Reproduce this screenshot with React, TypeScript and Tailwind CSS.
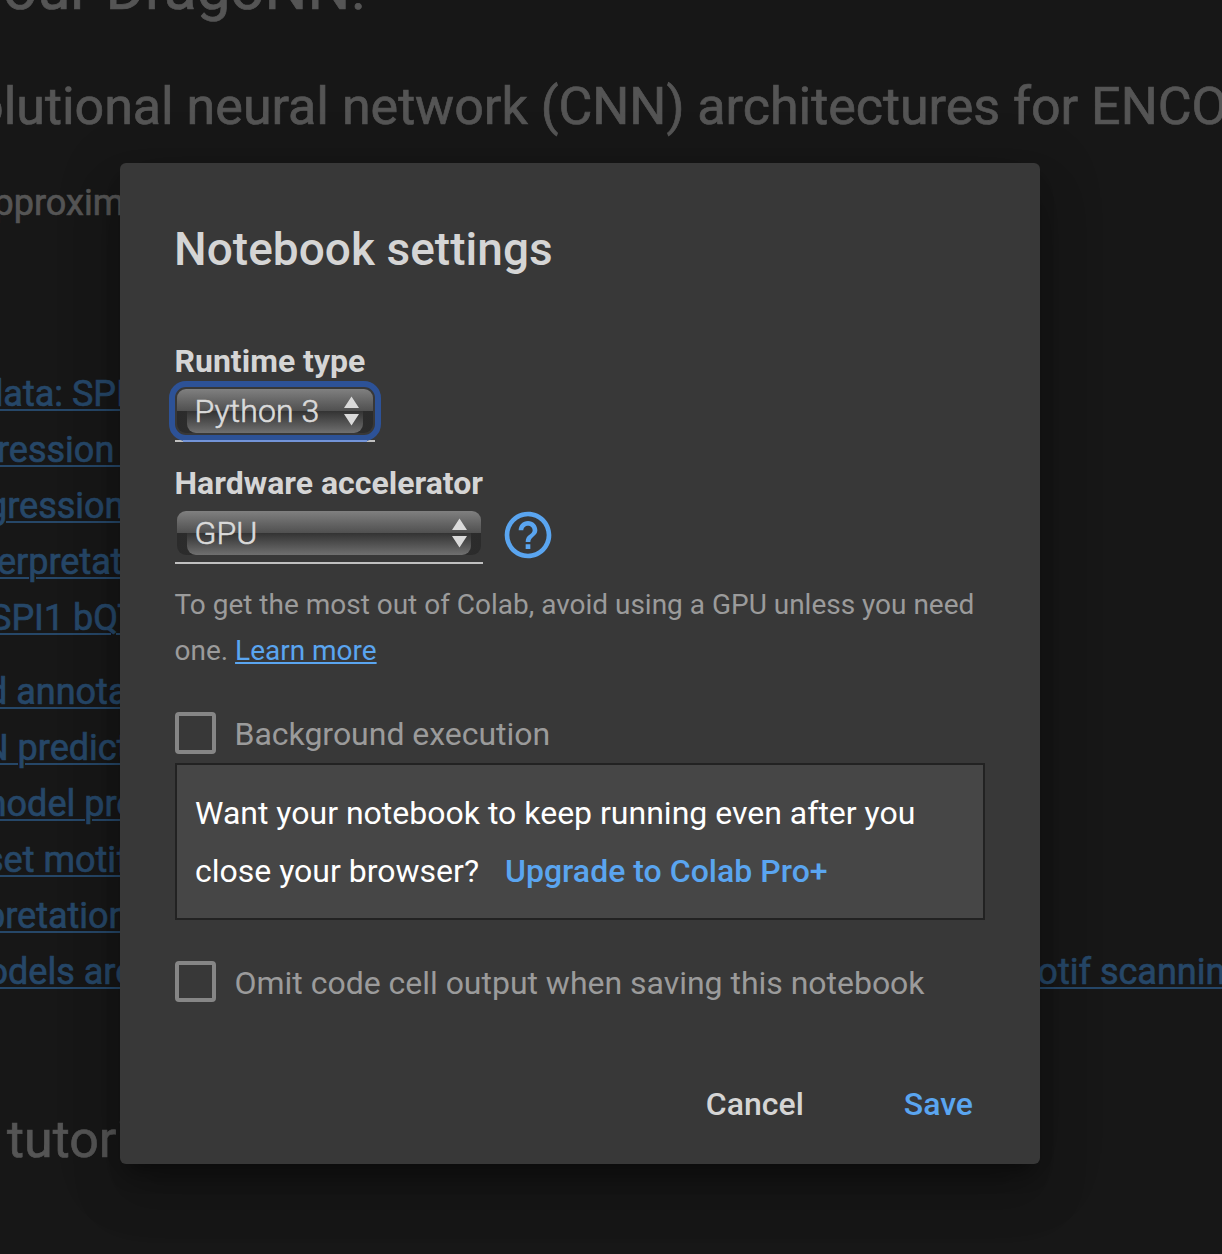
import React from "react";
import { MdHelpOutline } from "react-icons/md";

function Line({ className, children }: { className: string; children: React.ReactNode }) {
  return <div className={`w-fit shrink-0 whitespace-pre ${className}`}>{children}</div>;
}

const link = "text-[36px] leading-[56px] text-[#264768] underline decoration-[2px] underline-offset-[3px]";

function NotebookBackdrop() {
  return (
    <div className="flex h-full flex-col overflow-hidden text-[#555] [-webkit-text-stroke:0.7px]">
      <Line className="-mt-[41px] ml-[3px] text-[60px] leading-[60px]">our DragoNN!</Line>
      <Line className="mt-[58px] -ml-[26px] text-[52px] leading-[60px] tracking-[-0.02px]">
        olutional neural network (CNN) architectures for ENCODE
      </Line>
      <Line className="mt-[38px] -ml-[26px] text-[36px] leading-[56px]">approximately</Line>
      <Line className={`mt-[135px] -ml-[17px] ${link}`}>data: SPI1</Line>
      <Line className={`-ml-[3px] ${link}`}>ression models</Line>
      <Line className={`-ml-[13px] ${link}`}>gression models</Line>
      <Line className={`-ml-[3px] ${link}`}>erpretation</Line>
      <Line className={`-ml-[10px] ${link}`}>SPI1 bQTL</Line>
      <Line className={`mt-[18px] -ml-[13px] ${link}`}>d annotations</Line>
      <Line className={`-ml-[17px] ${link}`}>N predictions</Line>
      <Line className={`-ml-[25px] ${link}`}>model predictions</Line>
      <Line className={`-ml-[15px] ${link}`}>set motifs</Line>
      <Line className={`-ml-[15px] ${link}`}>pretation</Line>
      <div className="flex justify-between">
        <Line className={`-ml-[12.5px] ${link}`}>odels are</Line>
        <Line className={`-mr-[23.5px] ${link}`}>motif scanning</Line>
      </div>
      <Line className="mt-[110px] ml-[7px] text-[52px] leading-[60px]">tutorial</Line>
    </div>
  );
}

function Select({ value, width, focused }: { value: string; width: string; focused?: boolean }) {
  return (
    <div className={`relative h-[55px] border-b-2 border-[#c0c0c0] px-[2px] pt-[2px] ${width}`}>
      <div className="relative flex h-[44px] items-center justify-between overflow-hidden rounded-[9px] bg-linear-to-b from-[#808080] from-0% via-[#505050] via-50% to-[#383838] to-50%">
        <div className="absolute inset-x-0 bottom-0 h-[22px] bg-linear-to-r from-[#2b2b2b] via-[#353535] to-[#2b2b2b]" />
        <div className="absolute inset-x-[10px] bottom-0 h-[22px] rounded-b-[9px] bg-linear-to-b from-[#333] to-[#707070]" />
        <span className="relative pl-[17.5px] text-[32px] leading-[44px] font-light tracking-[0.1px] text-[#dadada] [-webkit-text-stroke:0.6px]">
          {value}
        </span>
        <svg className="relative mr-[14px] h-[30px] w-[15px] fill-[#dadada]" viewBox="0 0 15 30">
          <path d="M7.5 0.5L15 12H0ZM7.5 29.5L0 18H15Z" />
        </svg>
      </div>
      {focused && (
        <div className="absolute -inset-x-[6px] -top-[6px] h-[60px] rounded-[17px] border-[6px] border-[#2d5297]">
          <div className="absolute inset-x-[8px] -bottom-[7px] h-[2px] bg-[#7394d8]" />
        </div>
      )}
    </div>
  );
}

function Checkbox({ label, height }: { label: string; height: string }) {
  return (
    <div className="flex h-[42px] gap-[18.5px]">
      <div className={`w-[41px] rounded-[4px] border-4 border-[#868686] ${height}`} />
      <span className="pt-[1px] text-[32px] leading-[42px] tracking-[-0.02px] text-[#9b9b9b]">{label}</span>
    </div>
  );
}

function SettingsDialog() {
  return (
    <div className="absolute top-[163px] left-[120px] flex h-[1001px] w-[920px] flex-col rounded-[6px] bg-[#383838] px-[55px] text-[#d5d5d5] shadow-[0_32px_48px_4px_rgba(0,0,0,0.14),0_12px_60px_10px_rgba(0,0,0,0.12),0_16px_20px_-10px_rgba(0,0,0,0.4)]">
      <h2 className="mt-[56px] -ml-px text-[46px] leading-[60px] font-medium tracking-[0.03px] whitespace-nowrap">Notebook settings</h2>
      <label className="mt-[62px] -ml-[0.5px] text-[32px] leading-[40px] font-bold">Runtime type</label>
      <div className="mt-[6px]">
        <Select value="Python 3" width="w-[200px]" focused />
      </div>
      <label className="mt-[21px] -ml-[0.5px] text-[32px] leading-[40px] font-bold">Hardware accelerator</label>
      <div className="mt-[6px] flex">
        <Select value="GPU" width="w-[308px]" />
        <MdHelpOutline className="-mt-[2.5px] ml-[17px] size-[56px] text-[#5aa5f0]" />
      </div>
      <p className="mt-[17.5px] -ml-[0.5px] text-[28px] leading-[46px] tracking-[-0.01px] whitespace-nowrap text-[#9b9b9b]">
        To get the most out of Colab, avoid using a GPU unless you need
        <br />
        one. <span className="text-[#5aa5f0] underline decoration-2 underline-offset-[2px]">Learn more</span>
      </p>
      <div className="mt-[38px]">
        <Checkbox label="Background execution" height="h-[42px]" />
      </div>
      <div className="mt-[9px] h-[157px] border-2 border-[#222] bg-[#464646] px-[18px] pt-[19px] text-[32px] leading-[58px] whitespace-nowrap text-white">
        Want your notebook to keep running even after you
        <br />
        close your browser? <span className="ml-[18px] font-medium tracking-[0.02px] text-[#5aa5f0]">Upgrade to Colab Pro+</span>
      </div>
      <div className="mt-[41px]">
        <Checkbox label="Omit code cell output when saving this notebook" height="h-[41px]" />
      </div>
      <div className="mt-[81px] mr-[12px] flex justify-end gap-[100px] text-[32px] leading-[40px] font-medium">
        <button>Cancel</button>
        <button className="text-[#5aa5f0]">Save</button>
      </div>
    </div>
  );
}

export default function App() {
  return (
    <main className="relative h-[1254px] w-[1222px] overflow-hidden bg-[#171717] font-['Roboto',sans-serif]">
      <NotebookBackdrop />
      <SettingsDialog />
    </main>
  );
}
